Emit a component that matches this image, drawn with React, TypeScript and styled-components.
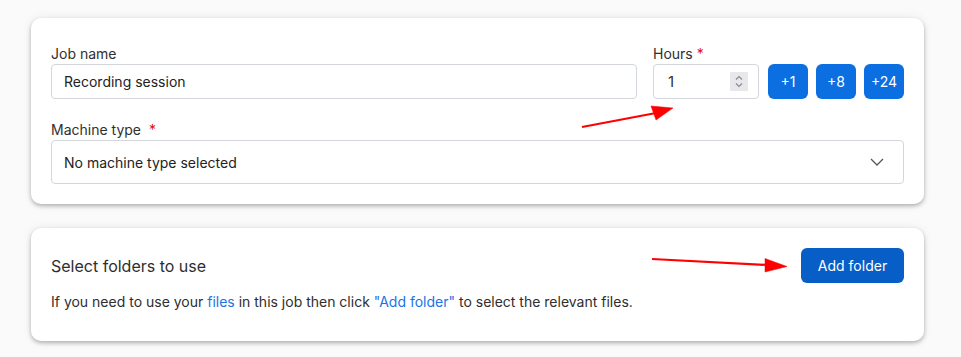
import React from 'react';
import styled, { createGlobalStyle } from 'styled-components';

const GlobalStyle = createGlobalStyle`
  html, body {
    margin: 0;
    padding: 0;
    background: #fafafa;
    font-family: Inter, "Noto Sans", sans-serif;
    color: #2e2e2e;
  }
  * { box-sizing: border-box; }
`;

const Page = styled.div`
  position: relative;
  padding: 18px 37px 0 31px;
  height: 357px;
  overflow: hidden;
  display: flex;
  flex-direction: column;
  gap: 24px;
`;

const Card = styled.div<{ $pad: string }>`
  background: #fff;
  border-radius: 10px;
  padding: ${(p) => p.$pad};
  box-shadow: 0 2px 4px rgba(0, 0, 0, 0.28), 0 0 12px rgba(0, 0, 0, 0.06);
  flex-shrink: 0;
`;

const Row = styled.div<{ $gap: number }>`
  display: flex;
  gap: ${(p) => p.$gap}px;
  align-items: flex-end;
`;

const Field = styled.div<{ $grow?: boolean }>`
  display: flex;
  flex-direction: column;
  flex: ${(p) => (p.$grow ? '1' : '0 0 auto')};
`;

const Label = styled.label`
  font-size: 14px;
  line-height: 20px;
  color: #2f2f2f;
`;

const Star = styled.span<{ $gap?: number }>`
  color: #e01010;
  margin-left: ${(p) => p.$gap ?? 4}px;
`;

const TextInput = styled.input`
  height: 35px;
  width: 100%;
  border: 1px solid #d3d6db;
  border-radius: 4px;
  padding: 0 12px;
  font: 14px Inter, sans-serif;
  color: #222;
  background: #fff;
  outline: none;
`;

const NumberWrap = styled.div`
  position: relative;
  width: 106px;
`;

const NumberInput = styled(TextInput)`
  padding: 0 14px;
  font-size: 15px;
  color: #333;
  -moz-appearance: textfield;
  &::-webkit-inner-spin-button,
  &::-webkit-outer-spin-button {
    -webkit-appearance: none;
    margin: 0;
  }
`;

const Spinner = styled.div`
  position: absolute;
  right: 11px;
  top: 8px;
  width: 18px;
  height: 19px;
  background: #e8e8ec;
  display: flex;
  align-items: center;
  justify-content: center;
`;

const Steps = styled.div`
  display: flex;
  gap: 8px;
`;

const StepButton = styled.button`
  width: 40px;
  height: 35px;
  border: none;
  border-radius: 6px;
  background: #0b6fe2;
  color: #fff;
  font: 14px Inter, sans-serif;
  padding: 0;
`;

const Section = styled.div`
  margin-top: 21px;
  display: flex;
  flex-direction: column;
`;

const SelectBox = styled.div`
  height: 44px;
  border: 1px solid #d3d6db;
  border-radius: 4px;
  padding: 0 19px 0 12px;
  display: flex;
  align-items: center;
  justify-content: space-between;
  font-size: 14px;
  color: #222;
`;

const Header = styled.div`
  display: flex;
  align-items: center;
  justify-content: space-between;
`;

const Title = styled.h2`
  margin: 0;
  font-size: 16px;
  font-weight: 400;
  color: #2e2e2e;
`;

const PrimaryButton = styled.button`
  height: 35px;
  width: 103px;
  border: none;
  border-radius: 6px;
  background: #075ec6;
  color: #fff;
  font: 14px Inter, sans-serif;
`;

const Text = styled.p`
  margin: 9px 0 0;
  font-size: 14px;
  line-height: 20px;
  color: #2e2e2e;
`;

const Link = styled.a`
  color: #1a73e8;
  text-decoration: none;
`;

const Arrow = styled.svg`
  position: absolute;
  left: 0;
  top: 0;
  pointer-events: none;
`;

export default function App() {
  return (
    <>
      <GlobalStyle />
      <Page>
        <Card $pad="26px 20px 20px">
          <Row $gap={16}>
            <Field $grow>
              <Label>Job name</Label>
              <TextInput defaultValue="Recording session" />
            </Field>
            <Field>
              <Label>
                Hours<Star>*</Star>
              </Label>
              <Row $gap={9}>
                <NumberWrap>
                  <NumberInput type="number" defaultValue={1} />
                  <Spinner>
                    <svg width="10" height="15" viewBox="0 0 10 15" fill="none" stroke="#8a8a8f" strokeWidth="1.2">
                      <path d="M2 5.5 5 2.5 8 5.5" />
                      <path d="M2 9.5 5 12.5 8 9.5" />
                    </svg>
                  </Spinner>
                </NumberWrap>
                <Steps>
                  <StepButton>+1</StepButton>
                  <StepButton>+8</StepButton>
                  <StepButton>+24</StepButton>
                </Steps>
              </Row>
            </Field>
          </Row>
          <Section>
            <Label>
              Machine type<Star $gap={8}>*</Star>
            </Label>
            <SelectBox>
              No machine type selected
              <svg width="14" height="8" viewBox="0 0 14 8" fill="none" stroke="#555" strokeWidth="1.3">
                <path d="M1 1l6 6 6-6" />
              </svg>
            </SelectBox>
          </Section>
        </Card>

        <Card $pad="20px 20px 29px">
          <Header>
            <Title>Select folders to use</Title>
            <PrimaryButton>Add folder</PrimaryButton>
          </Header>
          <Text>
            If you need to use your <Link href="#">files</Link> in this job then click{' '}
            <Link href="#">"Add folder"</Link> to select the relevant files.
          </Text>
        </Card>

        <Card $pad="20px">&nbsp;</Card>

        <Arrow width="961" height="357" viewBox="0 0 961 357">
          <g fill="red" stroke="red">
            <path d="M582 127 L656 113" strokeWidth="2.2" />
            <path d="M673 108 L651 106 L656 120 Z" strokeWidth="0.5" />
            <path d="M652 259 L768 265" strokeWidth="2.2" />
            <path d="M787 266.5 L765 258.5 L765 272 Z" strokeWidth="0.5" />
          </g>
        </Arrow>
      </Page>
    </>
  );
}
